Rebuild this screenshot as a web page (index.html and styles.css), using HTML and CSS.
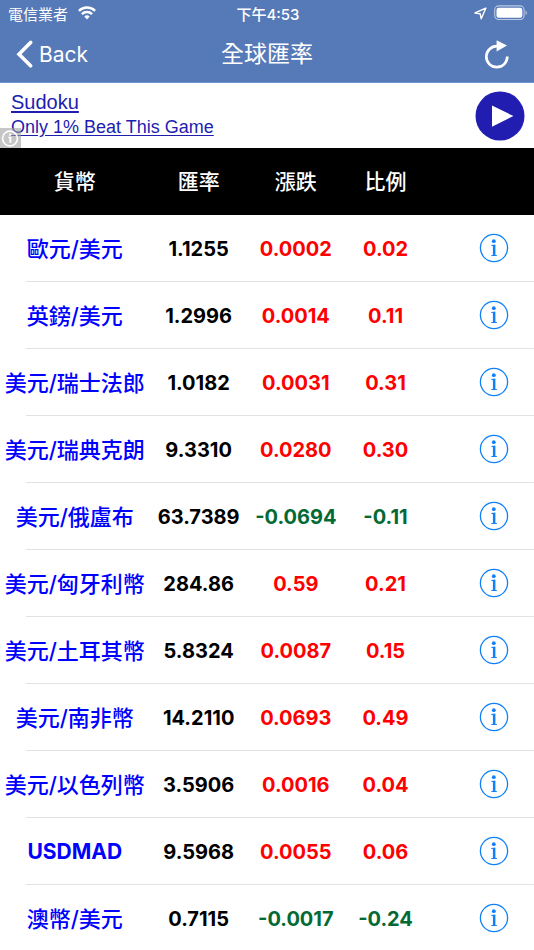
FILE: index.html
```html
<!DOCTYPE html>
<html lang="zh-Hant">

<head>
  <meta charset="UTF-8" />
  <meta name="viewport" content="width=device-width, initial-scale=1.0" />
  <title>全球匯率</title>
  <link rel="stylesheet" href="styles.css">
</head>

<body>
  <svg class="sprite" aria-hidden="true">
    <symbol id="info" viewBox="0 0 30 30">
      <circle cx="15" cy="15" r="13.6" fill="none" stroke="currentColor" stroke-width="1.3" />
      <circle cx="14.8" cy="8.2" r="1.9" fill="currentColor" />
      <path d="M12.2 11.9l4.2-0.4v10.4l1.6 0.4v0.8h-5.8v-0.8l1.7-0.4v-8.8l-1.7-0.4z" fill="currentColor" />
    </symbol>
  </svg>

  <header class="top">
    <div class="status">
      <div class="carrier">
        <span>電信業者</span>
        <svg width="18" height="14" viewBox="0 0 18 14" fill="none" stroke="#fff" stroke-width="2.4">
          <path d="M0.9 4.9a11.5 11.5 0 0 1 16.2 0" />
          <path d="M3.9 8.1a7.2 7.2 0 0 1 10.2 0" />
          <path d="M9 13.4l-2.7-2.8a3.9 3.9 0 0 1 5.4 0z" fill="#fff" stroke="none" />
        </svg>
      </div>
      <div class="time">下午4:53</div>
      <div class="battery">
        <svg width="13" height="13" viewBox="0 0 13 13" fill="none" stroke="#fff" stroke-width="1.4" stroke-linejoin="round">
          <path d="M11.8 1.2L1 6l5.2 0.8L7.2 11.8z" />
        </svg>
        <svg width="34" height="16" viewBox="0 0 34 16">
          <rect x="0.7" y="0.9" width="29.4" height="13.6" rx="4" fill="none" stroke="#b9c9e2" stroke-width="1.1" />
          <rect x="2.5" y="2.7" width="25.8" height="10" rx="2.2" fill="#fff" />
          <path d="M31.6 5.4c1.8 0.8 1.8 3.8 0 4.6z" fill="#b9c9e2" />
        </svg>
      </div>
    </div>
    <nav class="nav">
      <a class="back" href="#">
        <svg width="18" height="28" viewBox="0 0 18 28" fill="none" stroke="#fff" stroke-width="3.6" stroke-linecap="round">
          <path d="M14.6 2.4L3 14.2l11.6 11.6" />
        </svg>
        <span>Back</span>
      </a>
      <h1 class="title">全球匯率</h1>
      <button class="refresh" type="button" aria-label="Refresh">
        <svg width="26" height="30" viewBox="0 0 26 30">
          <path d="M13 7.2a10.5 10.5 0 1 0 10.3 10.4" fill="none" stroke="#fff" stroke-width="2.7" />
          <path d="M12.6 1.2L23 6.6l-10.4 6z" fill="#fff" />
        </svg>
      </button>
    </nav>
  </header>

  <section class="ad">
    <div class="ad-text">
      <a class="ad-title" href="#">Sudoku</a>
      <a class="ad-line" href="#">Only 1% Beat This Game</a>
    </div>
    <button class="play" type="button" aria-label="Play">
      <svg width="50" height="50" viewBox="0 0 50 50">
        <circle cx="25" cy="25" r="24.5" fill="#211db0" />
        <path d="M17 14.6v21.2L38.4 25z" fill="#fff" />
      </svg>
    </button>
    <div class="ad-badge">
      <svg width="20" height="20" viewBox="0 0 20 20">
        <circle cx="10" cy="10.5" r="7.4" fill="none" stroke="#fff" stroke-width="1.6" />
        <path d="M8.3 8.8h3v6H9.4v-4.6H8.3zM9 5.7h2.2v1.9H9z" fill="#fff" />
      </svg>
    </div>
  </section>

  <main class="list">
    <table class="rates">
      <thead>
        <tr>
          <th class="col-name">貨幣</th>
          <th class="col-rate">匯率</th>
          <th class="col-change">漲跌</th>
          <th class="col-ratio">比例</th>
          <th></th>
        </tr>
      </thead>
      <tbody>
        <tr>
          <td class="name">歐元/美元</td>
          <td>1.1255</td>
          <td class="up">0.0002</td>
          <td class="up">0.02</td>
          <td class="more"><button type="button" aria-label="Info"><svg><use href="#info" /></svg></button></td>
        </tr>
        <tr>
          <td class="name">英鎊/美元</td>
          <td>1.2996</td>
          <td class="up">0.0014</td>
          <td class="up">0.11</td>
          <td class="more"><button type="button" aria-label="Info"><svg><use href="#info" /></svg></button></td>
        </tr>
        <tr>
          <td class="name">美元/瑞士法郎</td>
          <td>1.0182</td>
          <td class="up">0.0031</td>
          <td class="up">0.31</td>
          <td class="more"><button type="button" aria-label="Info"><svg><use href="#info" /></svg></button></td>
        </tr>
        <tr>
          <td class="name">美元/瑞典克朗</td>
          <td>9.3310</td>
          <td class="up">0.0280</td>
          <td class="up">0.30</td>
          <td class="more"><button type="button" aria-label="Info"><svg><use href="#info" /></svg></button></td>
        </tr>
        <tr>
          <td class="name">美元/俄盧布</td>
          <td>63.7389</td>
          <td class="down">-0.0694</td>
          <td class="down">-0.11</td>
          <td class="more"><button type="button" aria-label="Info"><svg><use href="#info" /></svg></button></td>
        </tr>
        <tr>
          <td class="name">美元/匈牙利幣</td>
          <td>284.86</td>
          <td class="up">0.59</td>
          <td class="up">0.21</td>
          <td class="more"><button type="button" aria-label="Info"><svg><use href="#info" /></svg></button></td>
        </tr>
        <tr>
          <td class="name">美元/土耳其幣</td>
          <td>5.8324</td>
          <td class="up">0.0087</td>
          <td class="up">0.15</td>
          <td class="more"><button type="button" aria-label="Info"><svg><use href="#info" /></svg></button></td>
        </tr>
        <tr>
          <td class="name">美元/南非幣</td>
          <td>14.2110</td>
          <td class="up">0.0693</td>
          <td class="up">0.49</td>
          <td class="more"><button type="button" aria-label="Info"><svg><use href="#info" /></svg></button></td>
        </tr>
        <tr>
          <td class="name">美元/以色列幣</td>
          <td>3.5906</td>
          <td class="up">0.0016</td>
          <td class="up">0.04</td>
          <td class="more"><button type="button" aria-label="Info"><svg><use href="#info" /></svg></button></td>
        </tr>
        <tr>
          <td class="name latin">USDMAD</td>
          <td>9.5968</td>
          <td class="up">0.0055</td>
          <td class="up">0.06</td>
          <td class="more"><button type="button" aria-label="Info"><svg><use href="#info" /></svg></button></td>
        </tr>
        <tr>
          <td class="name">澳幣/美元</td>
          <td>0.7115</td>
          <td class="down">-0.0017</td>
          <td class="down">-0.24</td>
          <td class="more"><button type="button" aria-label="Info"><svg><use href="#info" /></svg></button></td>
        </tr>
      </tbody>
    </table>
  </main>
</body>

</html>
```
FILE: styles.css
```css
* {
  box-sizing: border-box;
}

body {
  display: flex;
  flex-direction: column;
  height: 100vh;
  margin: 0;
  background: #fff;
  font-family: Inter, "Noto Sans CJK TC", sans-serif;
}

svg {
  display: block;
}

button {
  padding: 0;
  border: 0;
  background: none;
  cursor: pointer;
}

.sprite {
  position: absolute;
  width: 0;
  height: 0;
}

.top {
  flex: none;
  color: #fff;
  background: #567ab8;
  border-bottom: 1px solid #7096cf;
}

/* status bar */
.status {
  display: grid;
  grid-template-columns: 1fr auto 1fr;
  align-items: center;
  height: 26px;
  padding: 0 6px 0 8px;
  font-size: 15px;
}

.carrier {
  display: flex;
  align-items: center;
  gap: 10px;
}

.time {
  font-weight: 500;
}

.battery {
  display: flex;
  align-items: center;
  justify-content: flex-end;
  gap: 7px;
}

/* navigation bar */
.nav {
  display: grid;
  grid-template-columns: 1fr auto 1fr;
  align-items: center;
  height: 56px;
  padding: 0 16px;
}

.back {
  display: flex;
  align-items: center;
  gap: 5px;
  font-size: 21px;
  color: #fff;
  text-decoration: none;
}

.title {
  margin: 0;
  padding-bottom: 4px;
  font-size: 23px;
  font-weight: 400;
}

.refresh {
  justify-self: end;
  margin-right: 8px;
}

/* ad banner */
.ad {
  position: relative;
  flex: none;
  display: flex;
  align-items: center;
  justify-content: space-between;
  height: 65px;
  padding: 0 9px 0 11px;
  font-family: "Liberation Sans", Arial, sans-serif;
}

.ad-text {
  display: flex;
  flex-direction: column;
  align-items: flex-start;
  padding-bottom: 3px;
}

.ad-text a {
  color: #211db0;
  text-underline-offset: 2px;
}

.ad-title {
  font-size: 20px;
  line-height: 26px;
}

.ad-line {
  font-size: 18px;
  line-height: 24px;
}

.ad-badge {
  position: absolute;
  left: 0;
  bottom: 0;
  width: 21px;
  height: 20px;
  background: rgba(160, 160, 160, .6);
}

/* rates */
.list {
  flex: 1;
  min-height: 0;
  overflow-y: auto;
  scrollbar-width: none;
}

.rates {
  width: 100%;
  table-layout: fixed;
  border-collapse: collapse;
}

.col-name {
  width: 28%;
}

.col-rate {
  width: 18.4%;
}

.col-change {
  width: 18%;
}

.col-ratio {
  width: 15.6%;
}

.rates th,
.rates td {
  height: 67px;
  padding: 0;
  font-size: 20px;
  text-align: center;
  white-space: nowrap;
}

.rates th {
  padding-bottom: 4px;
  font-size: 21px;
  font-weight: 500;
  color: #fff;
  background: #000;
}

.rates td {
  font-weight: 700;
  color: #000;
  background: linear-gradient(#e2e2e4, #e2e2e4) bottom / 100% 1px no-repeat;
}

.rates .name {
  padding: 0 0 4px;
  font-size: 22px;
  font-weight: 500;
  color: #00f;
  background-position: 26px bottom;
}

.rates .latin {
  padding: 0;
  font-size: 21px;
  font-weight: 700;
}

.rates .up {
  color: #f00;
}

.rates .down {
  color: #046a35;
}

.rates .more {
  padding: 0 25px 1px 0;
}

.more button {
  display: block;
  margin-left: auto;
  color: #1080f8;
}

.more svg {
  width: 30px;
  height: 30px;
}
```
